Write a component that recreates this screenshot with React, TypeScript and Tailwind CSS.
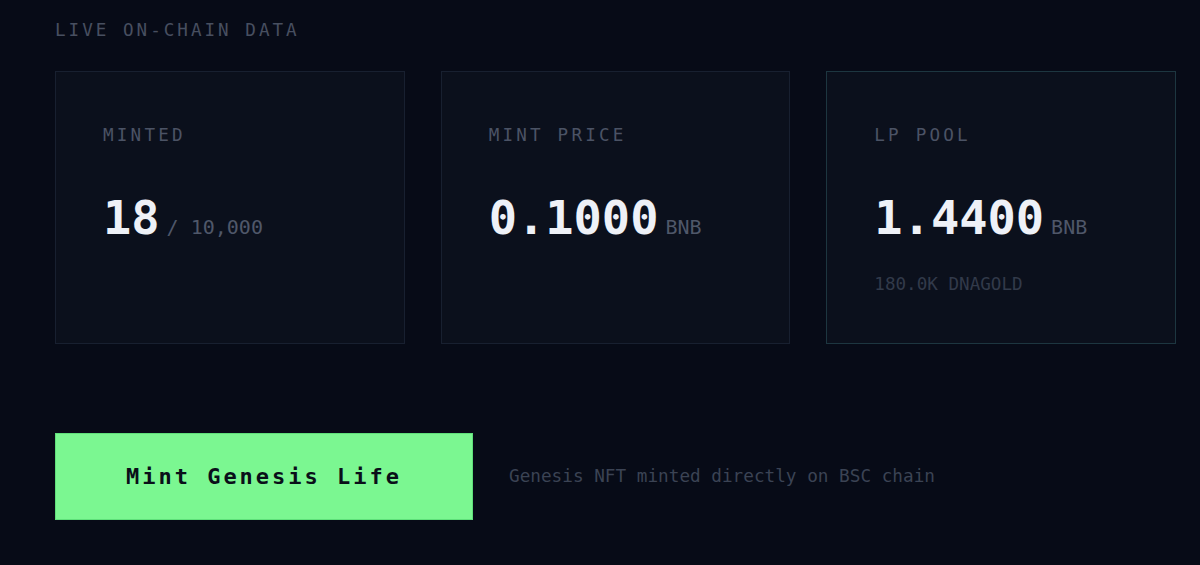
import React from "react";

const mono = "font-['DejaVu_Sans_Mono',monospace]";

function Card({
  label,
  value,
  unit,
  sub,
  highlight,
}: {
  label: string;
  value: string;
  unit: React.ReactNode;
  sub?: string;
  highlight?: boolean;
}) {
  return (
    <div
      className={`h-[273px] border bg-[#0b101c] pl-[47px] pt-[54px] ${
        highlight ? "border-[#1d3640]" : "border-[#182030]"
      }`}
    >
      <div className="text-[17.6px] leading-[18px] tracking-[3.2px] text-[#4b5365]">{label}</div>
      <div className="mt-[50px] flex items-baseline">
        <span className="text-[47px] leading-[48px] font-bold text-[#eef1f7]">{value}</span>
        <span className="ml-[7px] text-[20px] leading-[20px] text-[#4f5769]">{unit}</span>
      </div>
      {sub && (
        <div className="mt-[33px] text-[17.6px] leading-[18px] text-[#323a4a]">{sub}</div>
      )}
    </div>
  );
}

export default function App() {
  return (
    <div className={`h-[565px] w-[1200px] bg-[#070b17] ${mono} pl-[55px] pr-[24px] pt-[21px]`}>
      <div className="text-[17.6px] leading-[18px] tracking-[3px] text-[#474f60]">LIVE ON-CHAIN DATA</div>
      <div className="mt-[32px] grid w-[1121px] grid-cols-3 gap-[36px]">
        <Card label="MINTED" value="18" unit="/ 10,000" />
        <Card label="MINT PRICE" value="0.1000" unit="BNB" />
        <Card label="LP POOL" value="1.4400" unit="BNB" sub="180.0K DNAGOLD" highlight />
      </div>
      <div className="mt-[89px] flex items-center gap-[36px]">
        <button className="flex h-[87px] w-[418px] items-center justify-center border border-[#5fe07a] bg-[#7bf791] text-[22px] font-bold tracking-[3px] text-[#0a0f19]">
          Mint Genesis Life
        </button>
        <div className="text-[17.7px] text-[#3b4354]">Genesis NFT minted directly on BSC chain</div>
      </div>
    </div>
  );
}
